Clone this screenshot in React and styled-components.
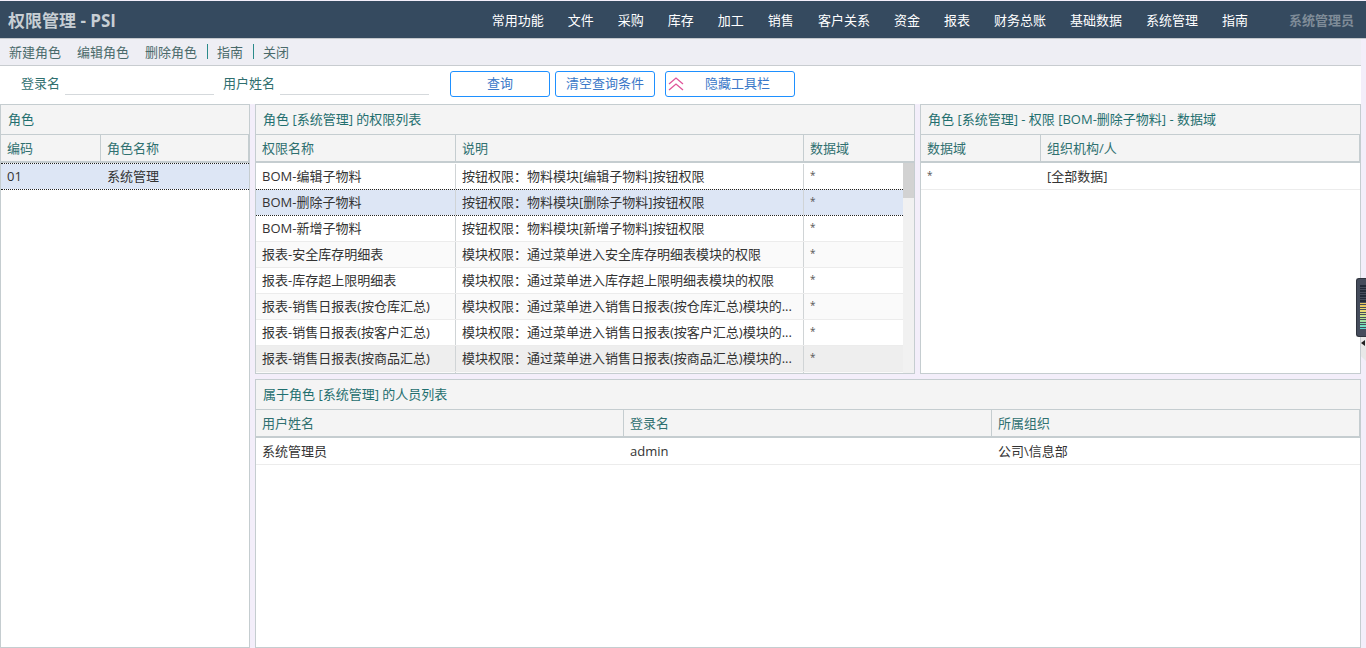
import React from "react";
import styled, { createGlobalStyle } from "styled-components";

const Global = createGlobalStyle`
  html, body { margin: 0; padding: 0; height: 100%; overflow: hidden; }
  body { font-family: "Open Sans", "Noto Sans CJK SC", sans-serif; font-size: 13px; background: #f3eefa; }
  * { box-sizing: border-box; }
`;
const Page = styled.div`width: 1366px; height: 648px; overflow: hidden; position: relative; display: flex; flex-direction: column; background: #f3eefa;`;
const Header = styled.header`height: 38px; margin-top: 1px; flex: none; background: #354a5f; display: flex; align-items: center; padding: 0 12px 0 8px; border-bottom: 1px solid #c4c8cc;`;
const Brand = styled.div`font-size: 17px; font-weight: 700; color: #c7ced4; flex: 1; white-space: nowrap;`;
const Menu = styled.span`color: #fff; font-size: 13px; margin-right: 24px; white-space: nowrap;`;
const UserName = styled.span`color: #7f8c98; font-weight: 700; font-size: 13px; margin-left: 17px; white-space: nowrap;`;
const Content = styled.div`width: 1361px; flex: 1; min-height: 0; display: flex; flex-direction: column; background: #f3eefa;`;
const Actions = styled.nav`height: 27px; flex: none; background: #eeeef4; border-bottom: 1px solid #c8ccd0; display: flex; align-items: center; padding: 0 0 2px 9px; color: #4a6a6a; white-space: nowrap;`;
const Action = styled.span`margin-right: 16px;`;
const Sep = styled.span`width: 1px; height: 15px; background: #2a8a8a; margin: 0 9px 0 -6px;`;
const QueryBar = styled.div`height: 38px; flex: none; background: #fff; display: flex; align-items: center; padding: 0 0 2px 21px;`;
const Label = styled.label`color: #2f6f6f; white-space: nowrap; margin-bottom: 3px;`;
const Field = styled.div`width: 149px; height: 22px; margin: 0 9px 0 5px; border-bottom: 1px solid #d5d9dc;`;
const SpacedField = styled(Field)`margin-right: 21px;`;
const Btn = styled.button`
  height: 26px; width: ${p => p.$w}px; margin-right: ${p => p.$mr || 0}px; background: #fff; border: 1px solid #1e90ff; border-radius: 3px;
  color: #3a78c8; font: inherit; padding: 0 0 3px ${p => p.$pl || 0}px; display: flex; align-items: center; justify-content: center; position: relative;
`;
const BtnIcon = styled.svg`position: absolute; left: 1px; top: 4px;`;
const Work = styled.div`flex: 1; min-height: 0; display: grid; grid-template-columns: 250px 660px 441px; grid-template-rows: 270px 269px; column-gap: 5px; row-gap: 5px; background: #f3eefa;`;
const Panel = styled.section`
  background: #fff; border: 1px solid #c5cdd0; overflow: hidden; display: flex; flex-direction: column; min-width: 0;
  grid-row: ${p => p.$row || "auto"}; grid-column: ${p => p.$col || "auto"};
`;
const Title = styled.div`height: 30px; flex: none; background: #f4f4f4; border-bottom: 1px solid #c5cdd0; padding: 0 0 2px 7px; display: flex; align-items: center; color: #1f6f6f; white-space: nowrap;`;
const Body = styled.div`flex: 1; display: flex; min-height: 0;`;
const Table = styled.div`flex: 1; min-width: 0; overflow: hidden;`;
const Row = styled.div`display: grid; grid-template-columns: ${p => p.$cols}; height: 26px;`;
const HeadRow = styled(Row)`height: 28px; background: #f4f4f4; border-bottom: 2px solid #c5cdd0;`;
const Head = styled.div`padding: 0 0 2px 6px; border-right: 1px solid #c5cdd0; color: #2f7070; display: flex; align-items: center; white-space: nowrap;`;
const DataRow = styled(Row)`
  height: 27px; margin-bottom: -1px; position: relative; background-clip: padding-box;
  background-color: ${p => p.$selected ? "#dde6f5" : p.$hover ? "#eeeeee" : p.$alt ? "#fafafa" : "#fff"};
  border-top: 1px ${p => p.$selected ? "dotted #222" : "solid transparent"};
  border-bottom: 1px ${p => p.$selected ? "dotted #222" : "solid #ececec"};
  z-index: ${p => p.$selected ? 1 : 0};
`;
const Cell = styled.div`padding: 0 0 2px 6px; color: #333; display: flex; align-items: center; white-space: nowrap; overflow: hidden; border-right: ${p => p.$line ? "1px solid #d0d4d6" : "none"};`;
const StarCell = styled(Cell)`font-size: 10px; color: #555; padding-bottom: 3px;`;
const Track = styled.div`width: 11px; flex: none; background: #f1f1f1; display: flex; flex-direction: column;`;
const HeadFill = styled.div`height: 28px; background: #f4f4f4; border-bottom: 2px solid #c5cdd0;`;
const Thumb = styled.div`height: 35px; background: #d2d2d2;`;
const Meter = styled.div`position: absolute; right: 0; top: 278px; width: 10px; height: 59px; background: #454c5c; border-radius: 3px 0 0 3px; border: 1px solid #30343e; border-right: none; padding: 6px 0 0 3px; display: flex; flex-direction: column; gap: 1px;`;
const Tick = styled.div`height: 1.5px; flex: none; background: ${p => p.$c};`;
const Tab = styled.div`position: absolute; right: 0; top: 337px; width: 5px; height: 24px; background: #e8e8e8; clip-path: polygon(0 0, 100% 0, 100% 100%, 0 80%); padding-top: 3px;`;
const TabArrow = styled.div`width: 0; height: 0; border-style: solid; border-width: 3px 4px 3px 0; border-color: transparent #222 transparent transparent;`;

const c1 = "200px 348px 100px";
const perms = [
  ["BOM-编辑子物料", "按钮权限：物料模块[编辑子物料]按钮权限"],
  ["BOM-删除子物料", "按钮权限：物料模块[删除子物料]按钮权限"],
  ["BOM-新增子物料", "按钮权限：物料模块[新增子物料]按钮权限"],
  ["报表-安全库存明细表", "模块权限：通过菜单进入安全库存明细表模块的权限"],
  ["报表-库存超上限明细表", "模块权限：通过菜单进入库存超上限明细表模块的权限"],
  ["报表-销售日报表(按仓库汇总)", "模块权限：通过菜单进入销售日报表(按仓库汇总)模块的..."],
  ["报表-销售日报表(按客户汇总)", "模块权限：通过菜单进入销售日报表(按客户汇总)模块的..."],
  ["报表-销售日报表(按商品汇总)", "模块权限：通过菜单进入销售日报表(按商品汇总)模块的..."],
];
const menus = ["常用功能","文件","采购","库存","加工","销售","客户关系","资金","报表","财务总账","基础数据","系统管理","指南"];
const ticks = ["#222a38","#222a38","#222a38","#222a38","#222a38","#222a38","#222a38","#e8c860","#e8c860","#e8d870","#e8d870","#d8e080","#c8e088","#b0e090","#a0e0a0","#80e0b0","#70e0c0","#60d8d0"];

export default function App() {
  return (
    <Page>
      <Global />
      <Header>
        <Brand>权限管理 - PSI</Brand>
        {menus.map(m => <Menu key={m}>{m}</Menu>)}
        <UserName>系统管理员</UserName>
      </Header>
      <Content>
        <Actions>
          <Action>新建角色</Action><Action>编辑角色</Action><Action>删除角色</Action>
          <Sep /><Action>指南</Action><Sep /><Action>关闭</Action>
        </Actions>
        <QueryBar>
          <Label>登录名</Label><Field />
          <Label>用户姓名</Label><SpacedField />
          <Btn $w={100} $mr={5}>查询</Btn>
          <Btn $w={100} $mr={10}>清空查询条件</Btn>
          <Btn $w={130} $pl={15}>
            <BtnIcon width="18" height="16" viewBox="0 0 18 16" fill="none" stroke="#e0559a" strokeWidth="1.3">
              <path d="M2 8 L9 2 L16 8" /><path d="M2 14 L9 8 L16 14" />
            </BtnIcon>
            隐藏工具栏
          </Btn>
        </QueryBar>
        <Work>
          <Panel $row="1 / 3" $col="1">
            <Title>角色</Title>
            <Table>
              <HeadRow $cols="100px 1fr"><Head>编码</Head><Head>角色名称</Head></HeadRow>
              <DataRow $cols="100px 1fr" $selected><Cell>01</Cell><Cell>系统管理</Cell></DataRow>
            </Table>
          </Panel>
          <Panel>
            <Title>角色 [系统管理] 的权限列表</Title>
            <Body>
              <Table>
                <HeadRow $cols={c1}><Head>权限名称</Head><Head>说明</Head><Head>数据域</Head></HeadRow>
                {perms.map((p, i) => (
                  <DataRow key={p[0]} $cols={c1} $selected={i === 1} $alt={i % 2 === 1} $hover={i === 7}>
                    <Cell $line>{p[0]}</Cell><Cell $line>{p[1]}</Cell><StarCell $line>*</StarCell>
                  </DataRow>
                ))}
                <DataRow $cols={c1} $alt><Cell $line /><Cell $line /><Cell $line /></DataRow>
              </Table>
              <Track><HeadFill /><Thumb /></Track>
            </Body>
          </Panel>
          <Panel>
            <Title>角色 [系统管理] - 权限 [BOM-删除子物料] - 数据域</Title>
            <Table>
              <HeadRow $cols="120px 1fr"><Head>数据域</Head><Head>组织机构/人</Head></HeadRow>
              <DataRow $cols="120px 1fr"><StarCell>*</StarCell><Cell>[全部数据]</Cell></DataRow>
            </Table>
          </Panel>
          <Panel $col="2 / 4">
            <Title>属于角色 [系统管理] 的人员列表</Title>
            <Table>
              <HeadRow $cols="368px 368px 1fr"><Head>用户姓名</Head><Head>登录名</Head><Head>所属组织</Head></HeadRow>
              <DataRow $cols="368px 368px 1fr"><Cell>系统管理员</Cell><Cell>admin</Cell><Cell>公司\信息部</Cell></DataRow>
            </Table>
          </Panel>
        </Work>
      </Content>
      <Meter>{ticks.map((t, i) => <Tick key={i} $c={t} />)}</Meter>
      <Tab><TabArrow /></Tab>
    </Page>
  );
}
